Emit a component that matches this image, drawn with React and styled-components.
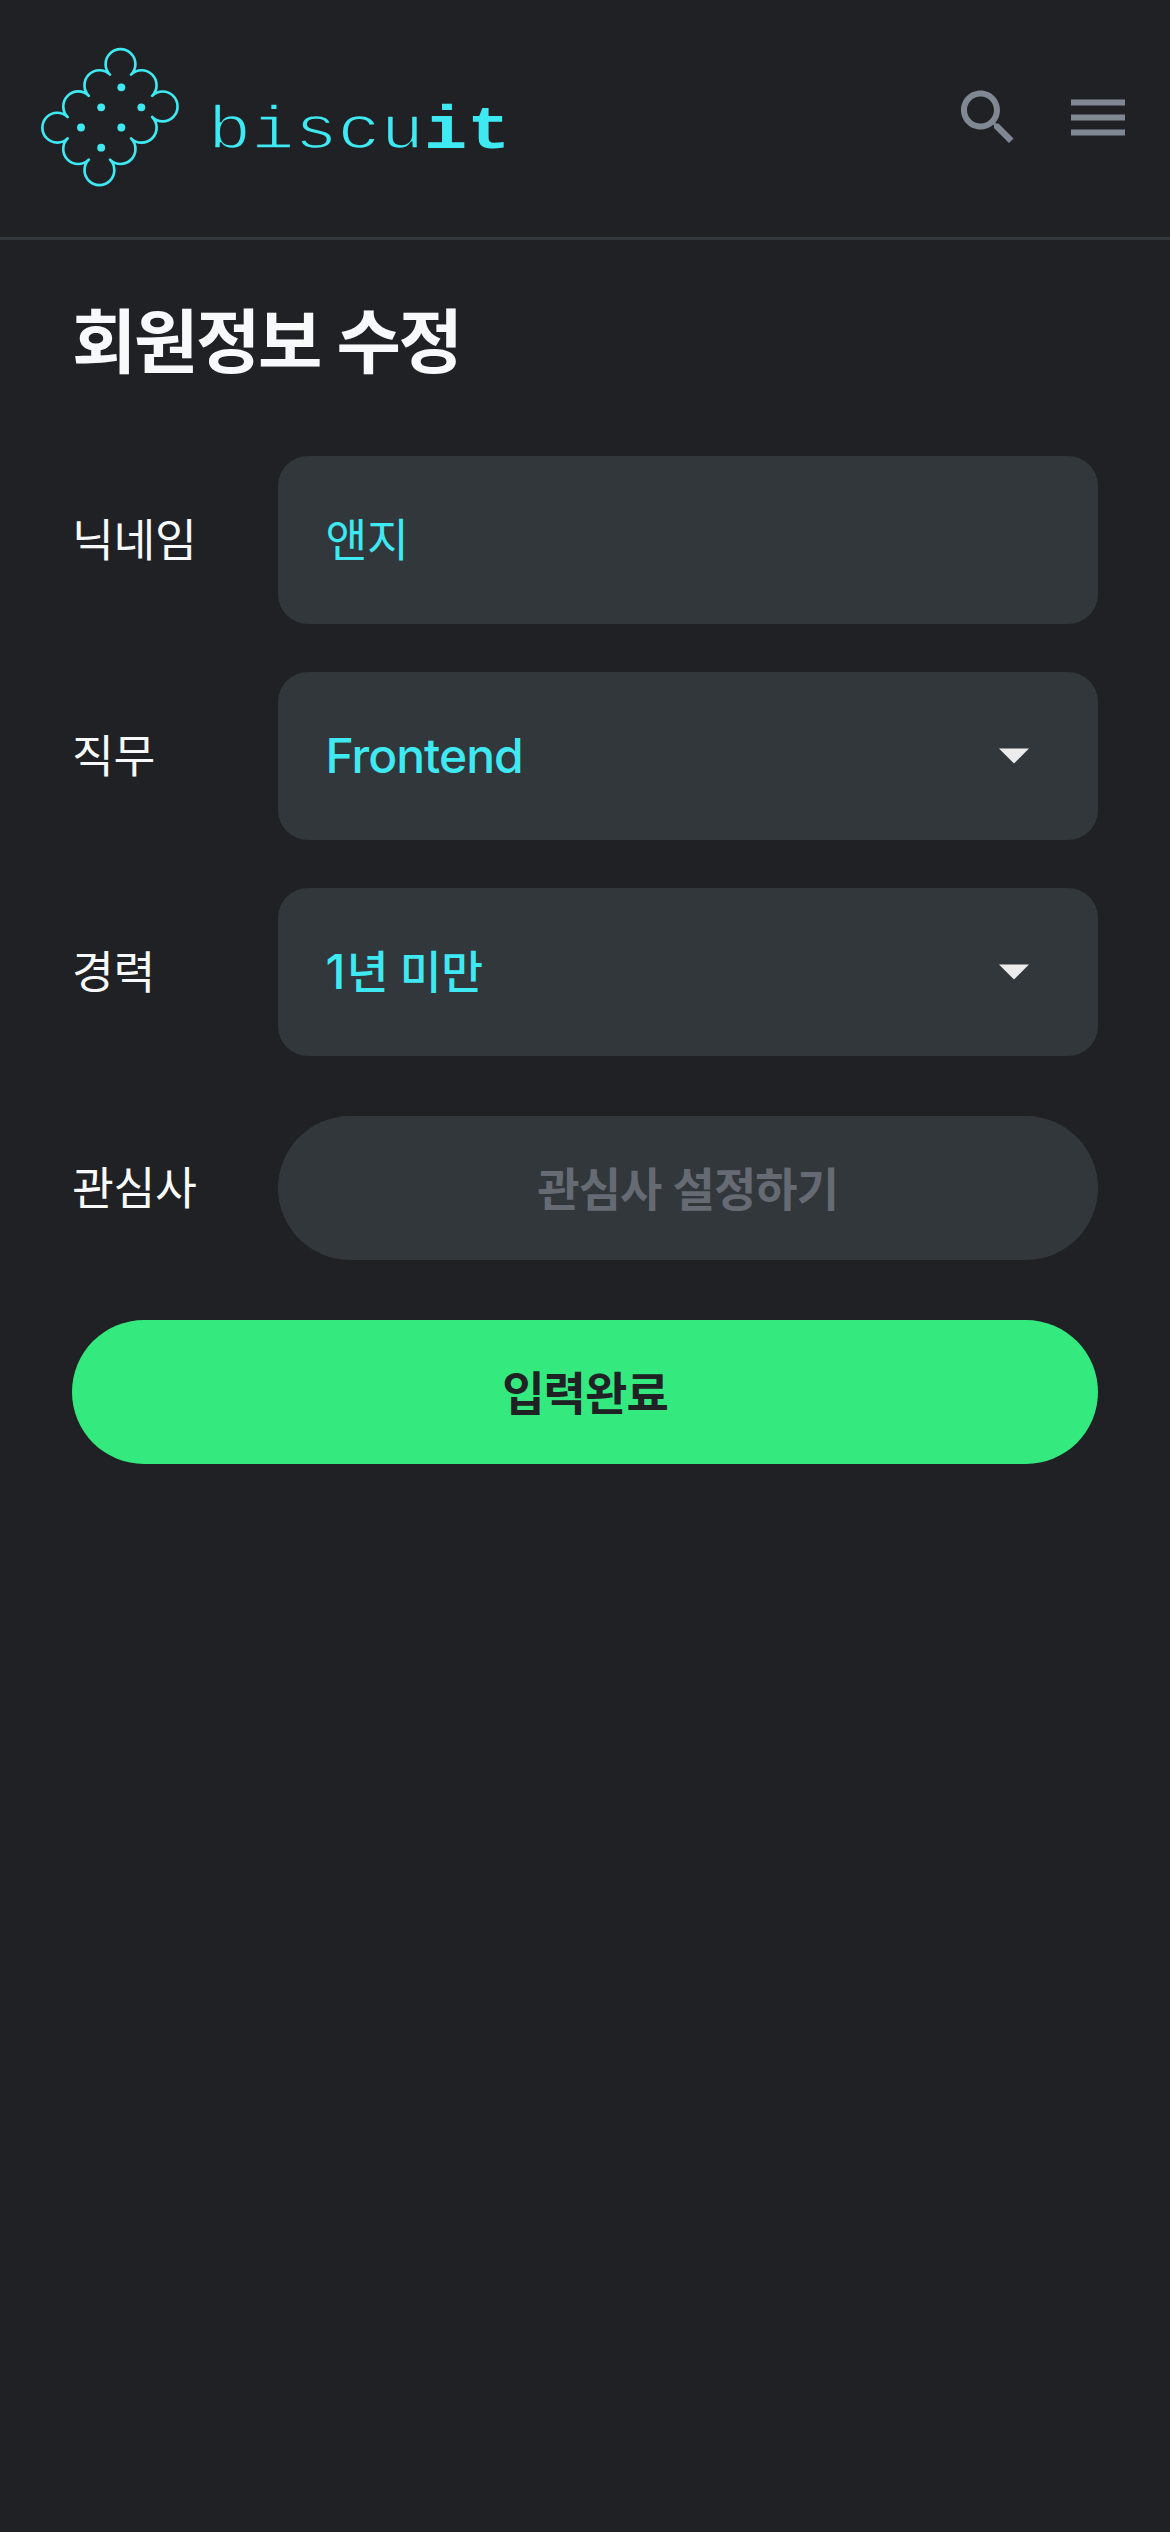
import React from "react";
import styled, { createGlobalStyle } from "styled-components";

const color = {
  bg: "#202124",
  field: "#32373b",
  cyan: "#3ee9f2",
  green: "#34ea7f",
  white: "#f8f9fa",
  icon: "#808893",
  muted: "#666a73",
};

const GlobalStyle = createGlobalStyle`
  *, *::before, *::after { box-sizing: border-box; }
  html, body { margin: 0; background: ${color.bg}; }
  body { font-family: Inter, "Noto Sans CJK KR", sans-serif; color: ${color.white}; }
`;

const Page = styled.div`
  min-height: 2532px;
  background: ${color.bg};
`;

const Header = styled.header`
  display: flex;
  justify-content: space-between;
  align-items: flex-start;
  height: 240px;
  padding: 30px 36px 0 30px;
  border-bottom: 3px solid ${color.field};
`;

const Logo = styled.a`
  display: flex;
  align-items: flex-start;
  color: ${color.cyan};
`;

const LogoMark = styled.svg`
  display: block;
  width: 170px;
  height: 170px;
`;

const LogoText = styled.span`
  margin-top: 67px;
  margin-left: 8px;
  font-family: "Liberation Mono", monospace;
  font-size: 62px;
  line-height: 70px;
  transform: scaleX(1.161);
  transform-origin: 0 50%;
  -webkit-text-stroke: 1.6px ${color.bg};
`;

const LogoStrong = styled.strong`
  font-weight: 700;
  -webkit-text-stroke: 0;
`;

const Actions = styled.nav`
  display: flex;
  gap: 38px;
  padding-top: 51px;
`;

const IconButton = styled.button`
  display: block;
  width: 72px;
  height: 72px;
  padding: 0;
  border: 0;
  background: none;
  color: ${color.icon};
`;

const Icon = styled.svg`
  display: block;
  width: 72px;
  height: 72px;
  fill: currentColor;
`;

const Main = styled.main`
  padding: 48px 72px 0;
`;

const Title = styled.h1`
  height: 108px;
  margin: 0 0 60px;
  font-size: 70px;
  line-height: 110px;
  font-weight: 700;
  letter-spacing: -2.4px;
  word-spacing: 2.4px;
`;

const Form = styled.form`
  display: flex;
  flex-direction: column;
  gap: 48px;
`;

const Row = styled.div`
  display: grid;
  grid-template-columns: 205.5px 1fr;
  align-items: center;
  height: 168px;
`;

const Label = styled.span`
  padding-top: 2px;
  font-size: 45.5px;
  line-height: 72px;
  letter-spacing: -0.4px;
`;

const Field = styled.div`
  display: flex;
  align-items: center;
  justify-content: space-between;
  height: 168px;
  padding: 0 69px 0 48px;
  border-radius: 30px;
  background: ${color.field};
  color: ${color.cyan};
`;

const Value = styled.span`
  padding-top: ${(p) => (p.$latin ? 0 : "2px")};
  font-size: ${(p) => (p.$latin ? "48px" : "45.5px")};
  line-height: 72px;
  font-weight: ${(p) => p.$weight || 400};
  letter-spacing: ${(p) => (p.$latin ? "-1px" : "-0.4px")};
`;

const Digit = styled.span`
  font-size: 48px;
  line-height: 1;
  letter-spacing: 1.2px;
`;

const Caret = styled.svg`
  display: block;
  width: 30px;
  height: 16px;
  fill: #ececec;
`;

const Button = styled.button`
  display: block;
  width: 100%;
  height: 144px;
  padding: 2px 0 0;
  border: 0;
  border-radius: 72px;
  background: ${(p) => (p.$primary ? color.green : color.field)};
  color: ${(p) => (p.$primary ? color.bg : color.muted)};
  font-family: inherit;
  font-size: 46px;
  line-height: 72px;
  font-weight: 700;
  letter-spacing: -0.9px;
  word-spacing: 1px;
`;

function Select({ children, latin }) {
  return (
    <Field>
      <Value $weight={500} $latin={latin}>
        {children}
      </Value>
      <Caret viewBox="0 -0.1667 10 5.3333">
        <path d="M0 0l5 5 5-5z" />
      </Caret>
    </Field>
  );
}

function Biscuit() {
  return (
    <LogoMark viewBox="0 0 510 510" fill="none" stroke="currentColor" strokeWidth="8" strokeLinecap="round" strokeLinejoin="round">
      <path d="M240 134A44.7 44.7 0 1 1 303 134A44.7 44.7 0 0 1 366.5 197.5A44.7 44.7 0 1 1 366.5 261A44.7 44.7 0 0 1 303 325A44.7 44.7 0 0 1 240 389A44.7 44.7 0 1 1 176.5 389A44.7 44.7 0 0 1 113 325A44.7 44.7 0 1 1 113 261A44.7 44.7 0 0 1 176.5 197.5A44.7 44.7 0 0 1 240 134Z" />
      <g fill="currentColor" stroke="none">
        <circle cx="274" cy="172" r="11.8" />
        <circle cx="213.5" cy="232" r="11.8" />
        <circle cx="334" cy="232" r="11.8" />
        <circle cx="153" cy="292.5" r="11.8" />
        <circle cx="274" cy="292.5" r="11.8" />
        <circle cx="213.5" cy="353" r="11.8" />
      </g>
    </LogoMark>
  );
}

export default function App() {
  return (
    <Page>
      <GlobalStyle />
      <Header>
        <Logo>
          <Biscuit />
          <LogoText>
            biscu<LogoStrong>it</LogoStrong>
          </LogoText>
        </Logo>
        <Actions>
          <IconButton>
            <Icon viewBox="0 -0.16 24 24">
              <path d="M15.5 14h-.79l-.28-.27C15.41 12.59 16 11.11 16 9.5 16 5.91 13.09 3 9.5 3S3 5.91 3 9.5 5.91 16 9.5 16c1.61 0 3.09-.59 4.23-1.57l.27.28v.79l5 4.99L20.49 19l-4.99-5zm-6 0C7.01 14 5 11.99 5 9.5S7.01 5 9.5 5 14 7.01 14 9.5 11.99 14 9.5 14z" />
            </Icon>
          </IconButton>
          <IconButton>
            <Icon viewBox="0 -0.16 24 24">
              <path d="M3 18h18v-2H3v2zm0-5h18v-2H3v2zm0-7v2h18V6H3z" />
            </Icon>
          </IconButton>
        </Actions>
      </Header>
      <Main>
        <Title>회원정보 수정</Title>
        <Form>
          <Row>
            <Label>닉네임</Label>
            <Field>
              <Value>앤지</Value>
            </Field>
          </Row>
          <Row>
            <Label>직무</Label>
            <Select latin>Frontend</Select>
          </Row>
          <Row>
            <Label>경력</Label>
            <Select>
              <Digit>1</Digit>년 미만
            </Select>
          </Row>
          <Row>
            <Label>관심사</Label>
            <Button type="button">관심사 설정하기</Button>
          </Row>
          <Button type="button" $primary>
            입력완료
          </Button>
        </Form>
      </Main>
    </Page>
  );
}
